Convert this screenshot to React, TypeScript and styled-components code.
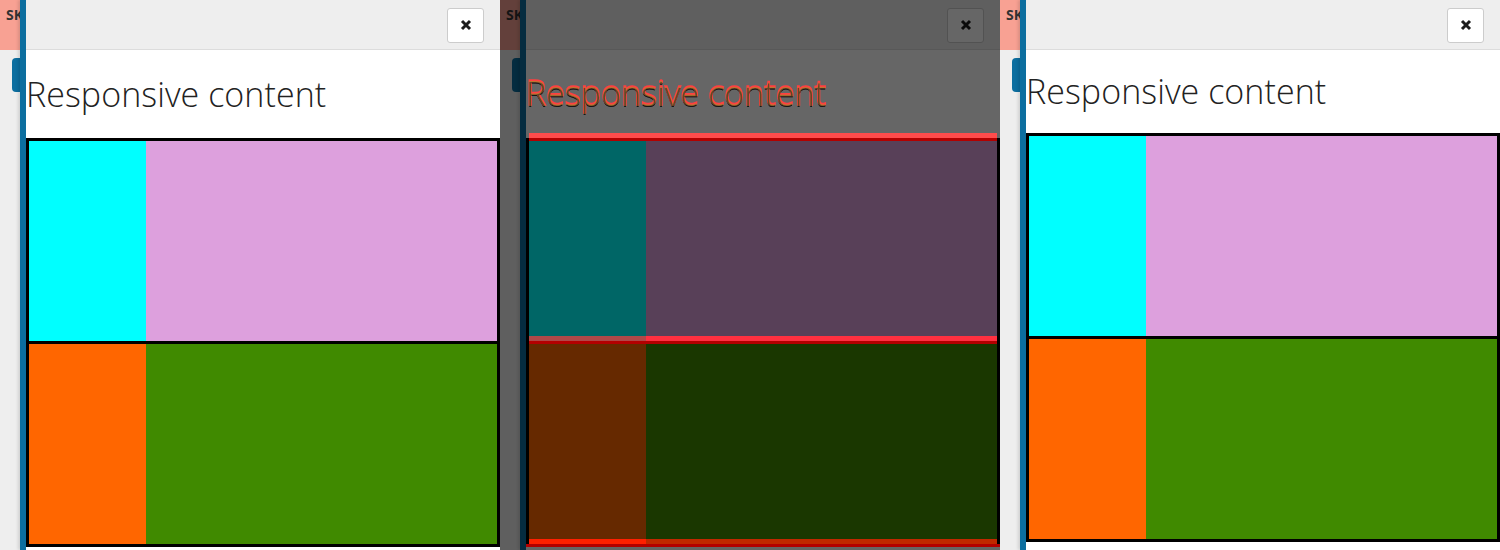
import React from "react";
import styled, { createGlobalStyle } from "styled-components";

const Global = createGlobalStyle`
  html, body { margin: 0; padding: 0; }
  body {
    width: 1500px;
    height: 550px;
    overflow: hidden;
    background: #ffffff;
    font-family: "Open Sans", "Liberation Sans", sans-serif;
  }
`;

const Row = styled.div`
  display: flex;
  width: 1500px;
  height: 550px;
`;

const PanelFrame = styled.div`
  display: flex;
  width: 500px;
  height: 550px;
  overflow: hidden;
  flex: none;
`;

const Strip = styled.div`
  width: 20px;
  flex: none;
  display: flex;
  flex-direction: column;
  background: #eeeeee;
  overflow: hidden;
`;

const StripHeader = styled.div`
  height: 50px;
  background: #f8a193;
  padding-left: 6px;
  padding-top: 6px;
  box-sizing: border-box;
  font-weight: 700;
  font-size: 14px;
  line-height: 18px;
  color: #333333;
  white-space: nowrap;
  overflow: hidden;
`;

const StripTab = styled.div`
  margin-top: 8px;
  margin-left: 12px;
  width: 12px;
  height: 34px;
  border-radius: 4px 0 0 4px;
  background: #0c6e9f;
`;

const Modal = styled.div`
  flex: 1;
  display: flex;
  flex-direction: column;
  background: #ffffff;
  border-left: 6px solid #0c6e9f;
  box-shadow: -2px 0 3px rgba(0, 0, 0, 0.12);
  min-width: 0;
`;

const Header = styled.div`
  height: 49px;
  flex: none;
  background: #eeeeee;
  border-bottom: 1px solid #dcdcdc;
  display: flex;
  align-items: center;
  justify-content: flex-end;
  padding-right: 16px;
`;

const CloseButton = styled.button`
  width: 37px;
  height: 35px;
  margin-top: 1px;
  padding: 0;
  background: #ffffff;
  border: 1px solid #cccccc;
  border-radius: 3px;
  display: flex;
  align-items: center;
  justify-content: center;
  color: #1c1c1c;
`;

const Title = styled.h1<{ $top: number; $bottom: number }>`
  margin: 0;
  padding: ${(p) => p.$top}px 0 ${(p) => p.$bottom}px 0;
  font-family: "Open Sans", "Liberation Sans", sans-serif;
  font-weight: 300;
  font-size: 34px;
  line-height: 40px;
  color: #222222;
  white-space: nowrap;
  letter-spacing: 0.05px;
`;

const Grid = styled.div`
  display: grid;
  grid-template-columns: 117px 1fr;
  grid-template-rows: 200px 200px;
  row-gap: 3px;
  padding: 3px;
  background: #000000;
  flex: none;
`;

const Cell = styled.div<{ $color: string }>`
  background: ${(p) => p.$color};
`;

const XIcon = () => (
  <svg width="12" height="12" viewBox="0 0 12 12">
    <path d="M2 2 L10 10 M10 2 L2 10" stroke="currentColor" strokeWidth="3" strokeLinecap="butt" />
  </svg>
);

type PanelProps = { top: number; bottom: number };

const Panel = ({ top, bottom }: PanelProps) => (
  <PanelFrame>
    <Strip>
      <StripHeader>SK</StripHeader>
      <StripTab />
    </Strip>
    <Modal>
      <Header>
        <CloseButton aria-label="close">
          <XIcon />
        </CloseButton>
      </Header>
      <Title $top={top} $bottom={bottom}>Responsive content</Title>
      <Grid>
        <Cell $color="#00ffff" />
        <Cell $color="#dda0dd" />
        <Cell $color="#ff6600" />
        <Cell $color="#408a00" />
      </Grid>
    </Modal>
  </PanelFrame>
);

const DiffFrame = styled.div`
  position: relative;
  width: 500px;
  height: 550px;
  overflow: hidden;
  flex: none;
`;

const Dimmed = styled.div`
  filter: brightness(0.4);
`;

const Mark = styled.div<{ $x: number; $y: number; $w: number; $h: number; $c: string }>`
  position: absolute;
  left: ${(p) => p.$x}px;
  top: ${(p) => p.$y}px;
  width: ${(p) => p.$w}px;
  height: ${(p) => p.$h}px;
  background: ${(p) => p.$c};
`;

const DiffText = styled.div<{ $y: number; $c: string; $stroke: number }>`
  position: absolute;
  left: 26px;
  top: ${(p) => p.$y}px;
  font-family: "Open Sans", "Liberation Sans", sans-serif;
  font-weight: 300;
  font-size: 34px;
  line-height: 40px;
  letter-spacing: 0.05px;
  white-space: nowrap;
  color: ${(p) => p.$c};
  -webkit-text-stroke: ${(p) => p.$stroke}px ${(p) => p.$c};
`;

const DiffPanel = () => (
  <DiffFrame>
    <Dimmed>
      <Panel top={24} bottom={24} />
    </Dimmed>
    <DiffText $y={72} $c="#ff4040" $stroke={1.6}>Responsive content</DiffText>
    <DiffText $y={73} $c="#b87830" $stroke={0}>Responsive content</DiffText>
    <DiffText $y={74} $c="rgba(30,30,30,0.55)" $stroke={0}>Responsive content</DiffText>
    <Mark $x={29} $y={133} $w={468} $h={5} $c="#ff4c4c" />
    <Mark $x={29} $y={138} $w={468} $h={3} $c="#b30000" />
    <Mark $x={29} $y={336} $w={117} $h={5} $c="#b04848" />
    <Mark $x={146} $y={336} $w={351} $h={5} $c="#ff3040" />
    <Mark $x={29} $y={341} $w={468} $h={3} $c="#b30000" />
    <Mark $x={29} $y={539} $w={117} $h={5} $c="#ff2000" />
    <Mark $x={146} $y={539} $w={351} $h={5} $c="#c02800" />
    <Mark $x={26} $y={544} $w={474} $h={3} $c="#b30000" />
  </DiffFrame>
);

export default function App() {
  return (
    <>
      <Global />
      <Row>
        <Panel top={24} bottom={24} />
        <DiffPanel />
        <Panel top={21} bottom={22} />
      </Row>
    </>
  );
}
